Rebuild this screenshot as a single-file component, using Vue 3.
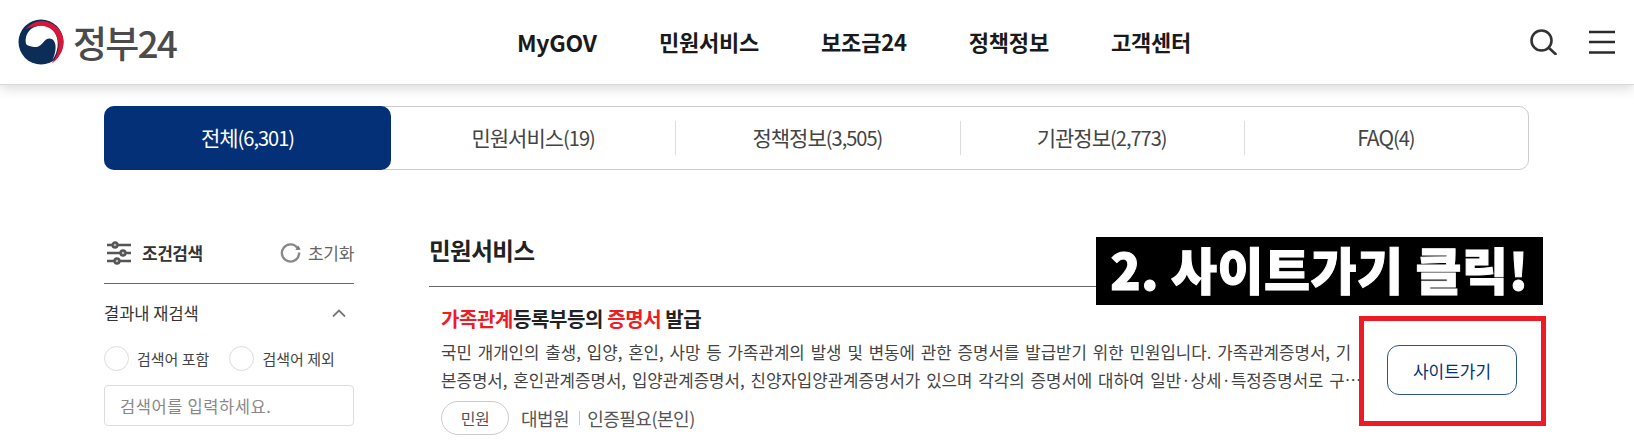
<script setup>
const navItems = ['MyGOV', '민원서비스', '보조금24', '정책정보', '고객센터']
const tabs = [
  { label: '전체', count: '6,301', active: true },
  { label: '민원서비스', count: '19' },
  { label: '정책정보', count: '3,505' },
  { label: '기관정보', count: '2,773' },
  { label: 'FAQ', count: '4' },
]
</script>

<template>
  <div class="page">
    <header class="top">
      <a class="logo">
        <svg class="logo__mark" viewBox="0 0 46 46" width="46" height="46">
          <circle cx="23" cy="23" r="22.500" fill="#0b2d57" />
          <path d="M8 25C6.500 18 9.500 13 13 10 20 5 31 5 36.500 13 42 22 40 33 34.500 41 38 33 38.500 26 36 22 33 18.500 29 19 26 22.500 23 26 20.500 28.500 16 28 12.500 27.500 9.500 27 8 25Z" fill="#fff" />
          <path d="M7.500 10.500C12.500 4.500 19 1.800 25 2 37 3 45.500 12 45.500 23 45.500 33 40 40 33.500 44.800 39 38 41 30 40.500 24 39.500 13 31 6.500 22 6.800 16 7 11 8.500 7.500 10.500Z" fill="#d8163a" />
        </svg>
        <span class="logo__text">정부24</span>
      </a>

      <nav class="gnb">
        <a v-for="item in navItems" :key="item" class="gnb__item">{{ item }}</a>
      </nav>

      <div class="util">
        <svg viewBox="0 0 28 26" width="28" height="26" fill="none" stroke="#333" stroke-width="2.600">
          <circle cx="12.500" cy="11.500" r="10" />
          <path d="M20 19l6.500 6" stroke-linecap="round" />
        </svg>
        <svg viewBox="0 0 26 24" width="26" height="24" fill="none" stroke="#2b2b2b" stroke-width="2.600">
          <path d="M0 2h26M0 12h26M0 22.500h26" />
        </svg>
      </div>
    </header>

    <main class="wrap">
      <ul class="tabs">
        <li
          v-for="tab in tabs"
          :key="tab.label"
          class="tabs__item"
          :class="{ 'tabs__item--on': tab.active }"
        >
          <span>{{ tab.label }}<small>({{ tab.count }})</small></span>
        </li>
      </ul>

      <div class="content">
        <aside class="side">
          <div class="side__head">
            <svg class="side__filter" viewBox="0 0 24 24" width="24" height="24" fill="#bbb" stroke="#555" stroke-width="2.300">
              <path d="M0 4h24M0 12h24M0 20h24" />
              <circle cx="8" cy="4" r="2.500" />
              <circle cx="16" cy="12" r="2.500" />
              <circle cx="10" cy="20" r="2.500" />
            </svg>
            <strong class="side__title">조건검색</strong>
            <span class="side__reset">
              <svg viewBox="0 0 22 22" width="21" height="21" fill="none" stroke="#888" stroke-width="2.500">
                <path d="M18.500 6.500A9 9 0 1 0 20 11" />
                <path d="M21.500 8l-5.500 .5 3.500-4.500z" fill="#777" stroke="none" />
              </svg>
              초기화
            </span>
          </div>

          <div class="side__section">
            <span>결과내 재검색</span>
            <svg viewBox="0 0 14 8" width="14" height="8" fill="none" stroke="#777" stroke-width="1.800">
              <path d="M1 7.500L7 1.500l6 6" />
            </svg>
          </div>

          <div class="side__radios">
            <label class="radio"><i></i>검색어 포함</label>
            <label class="radio"><i></i>검색어 제외</label>
          </div>

          <input class="side__input" type="text" placeholder="검색어를 입력하세요." />
        </aside>

        <section class="result">
          <h2 class="result__head">민원서비스</h2>
          <article class="card">
            <div class="card__body">
              <h3 class="card__title"><em>가족관계</em>등록부등의 <em>증명서</em> 발급</h3>
              <p class="card__desc">국민 개개인의 출생, 입양, 혼인, 사망 등 가족관계의 발생 및 변동에 관한 증명서를 발급받기 위한 민원입니다. 가족관계증명서, 기본증명서, 혼인관계증명서, 입양관계증명서, 친양자입양관계증명서가 있으며 각각의 증명서에 대하여 일반·상세·특정증명서로 구…</p>
              <div class="card__meta">
                <span class="card__tag">민원</span>
                <span class="card__org">대법원</span>
                <span class="card__auth">인증필요(본인)</span>
              </div>
            </div>
            <button class="card__go" type="button">사이트가기</button>
          </article>
        </section>
      </div>
    </main>

    <div class="note">2. 사이트가기 클릭!</div>
    <div class="mark"></div>
  </div>
</template>

<style>
html,
body {
  margin: 0;
  height: 443px;
  overflow: hidden;
  background: #fff;
}
</style>

<style scoped>
.page {
  position: relative;
  width: 1634px;
  height: 443px;
  overflow: hidden;
  font-family: "Noto Sans CJK KR", "Noto Sans", sans-serif;
  color: #222;
}

.top {
  display: grid;
  grid-template-columns: 1fr auto 1fr;
  align-items: center;
  height: 84px;
  padding: 0 18px;
  box-sizing: border-box;
  background: #fff;
  box-shadow: 0 1px 0 #d8d9dc, 0 4px 12px rgba(0, 0, 0, 0.16);
}

.logo {
  display: flex;
  align-items: center;
  gap: 9px;
}

.logo__text {
  font-size: 37px;
  font-weight: 500;
  line-height: 1;
  letter-spacing: -1.800px;
  color: #4b4b4d;
}

.gnb {
  display: flex;
  gap: 62px;
  margin-left: 74px;
}

.gnb__item {
  font-size: 22px;
  font-weight: 700;
  letter-spacing: -0.200px;
  color: #1a1a1a;
}

.gnb__item:first-child {
  font-size: 23px;
}

.util {
  display: flex;
  justify-content: flex-end;
  align-items: center;
  gap: 32px;
  padding-right: 1px;
}

.wrap {
  padding: 22px 105px 0 104px;
}

.tabs {
  display: flex;
  height: 64px;
  margin: 0;
  padding: 0;
  list-style: none;
  border: 1px solid #ccc;
  border-radius: 10px;
  box-sizing: border-box;
}

.tabs__item {
  position: relative;
  flex: 1;
  display: flex;
  align-items: center;
  justify-content: center;
  padding-bottom: 2px;
  box-sizing: border-box;
  font-size: 21px;
  letter-spacing: -1px;
  color: #444;
}

.tabs__item small {
  font-size: 20px;
}

.tabs__item + .tabs__item::before {
  content: "";
  position: absolute;
  left: 0;
  top: 14px;
  bottom: 14px;
  width: 1px;
  background: #ddd;
}

.tabs__item--on + .tabs__item::before {
  display: none;
}

.tabs__item--on {
  margin: -1px 0 -1px -1px;
  flex: 0 0 287px;
  background: #033076;
  border-radius: 10px;
  color: #fff;
}

.content {
  display: grid;
  grid-template-columns: 250px 1fr;
  column-gap: 75px;
  margin-top: 61px;
}

.side__head {
  display: flex;
  align-items: center;
  height: 53px;
  padding: 0 0 9px 3px;
  box-sizing: border-box;
  border-bottom: 1px solid #666;
}

.side__filter {
  margin-right: 11px;
}

.side__title {
  font-size: 17px;
  letter-spacing: -0.500px;
  color: #333;
}

.side__reset {
  display: flex;
  align-items: center;
  gap: 7px;
  margin-left: auto;
  font-size: 17px;
  letter-spacing: -0.300px;
  color: #666;
}

.side__section {
  display: flex;
  justify-content: space-between;
  align-items: center;
  margin-top: 17px;
  padding-right: 8px;
  font-size: 16.500px;
  color: #333;
}

.side__radios {
  display: flex;
  gap: 20px;
  margin-top: 21px;
}

.radio {
  display: flex;
  align-items: center;
  gap: 8px;
  font-size: 15px;
  color: #444;
}

.radio i {
  display: block;
  width: 25px;
  height: 25px;
  box-sizing: border-box;
  border: 1px solid #ddd;
  border-radius: 50%;
}

.side__input {
  display: block;
  width: 100%;
  height: 41px;
  margin-top: 14px;
  padding: 0 15px;
  box-sizing: border-box;
  border: 1px solid #ddd;
  border-radius: 4px;
  font-family: inherit;
  font-size: 16.500px;
  letter-spacing: 0.600px;
}

.side__input::placeholder {
  color: #888;
  opacity: 1;
}

.result__head {
  height: 55px;
  margin: 0;
  border-bottom: 1px solid #666;
  font-size: 23.500px;
  font-weight: 700;
  line-height: 38px;
  letter-spacing: -0.500px;
  color: #222;
}

.card {
  display: flex;
  align-items: center;
  padding: 18px 12px 0 12px;
}

.card__body {
  flex: 1;
  min-width: 0;
}

.card__title {
  margin: 0;
  font-size: 20px;
  font-weight: 700;
  line-height: 28px;
  letter-spacing: -0.400px;
  color: #222;
}

.card__title em {
  font-style: normal;
  color: #ee1c25;
}

.card__desc {
  margin: 5px 0 0;
  font-size: 16.800px;
  line-height: 28px;
  word-spacing: 2.100px;
  word-break: break-all;
  color: #444;
}

.card__meta {
  display: flex;
  align-items: center;
  margin-top: 7px;
  font-size: 18px;
  letter-spacing: -0.500px;
  color: #555;
}

.card__tag {
  display: flex;
  align-items: center;
  justify-content: center;
  width: 68px;
  height: 34px;
  margin-right: 12px;
  border: 1px solid #ccc;
  border-radius: 17px;
  box-sizing: border-box;
  font-size: 16px;
}

.card__org {
  padding-right: 11px;
  margin-right: 7px;
  position: relative;
}

.card__org::after {
  content: "";
  position: absolute;
  right: 0;
  top: 6px;
  bottom: 6px;
  width: 1px;
  background: #ccc;
}

.card__go {
  flex: none;
  width: 130px;
  height: 50px;
  margin-left: 24px;
  background: #fff;
  border: 1px solid #2b5391;
  border-radius: 12px;
  font-family: inherit;
  font-size: 17px;
  font-weight: 400;
  color: #033076;
}

/* overlays drawn on top of the captured page */
.note {
  position: absolute;
  left: 1096px;
  top: 237px;
  width: 447px;
  height: 68px;
  padding-bottom: 6px;
  box-sizing: border-box;
  display: flex;
  align-items: center;
  justify-content: center;
  background: #000;
  color: #fff;
  font-size: 50px;
  font-weight: 900;
  letter-spacing: 0.500px;
  white-space: nowrap;
  -webkit-text-stroke: 1px #fff;
}

.mark {
  position: absolute;
  left: 1359px;
  top: 316px;
  width: 187px;
  height: 110px;
  box-sizing: border-box;
  border: 5px solid #ed1c24;
}
</style>
